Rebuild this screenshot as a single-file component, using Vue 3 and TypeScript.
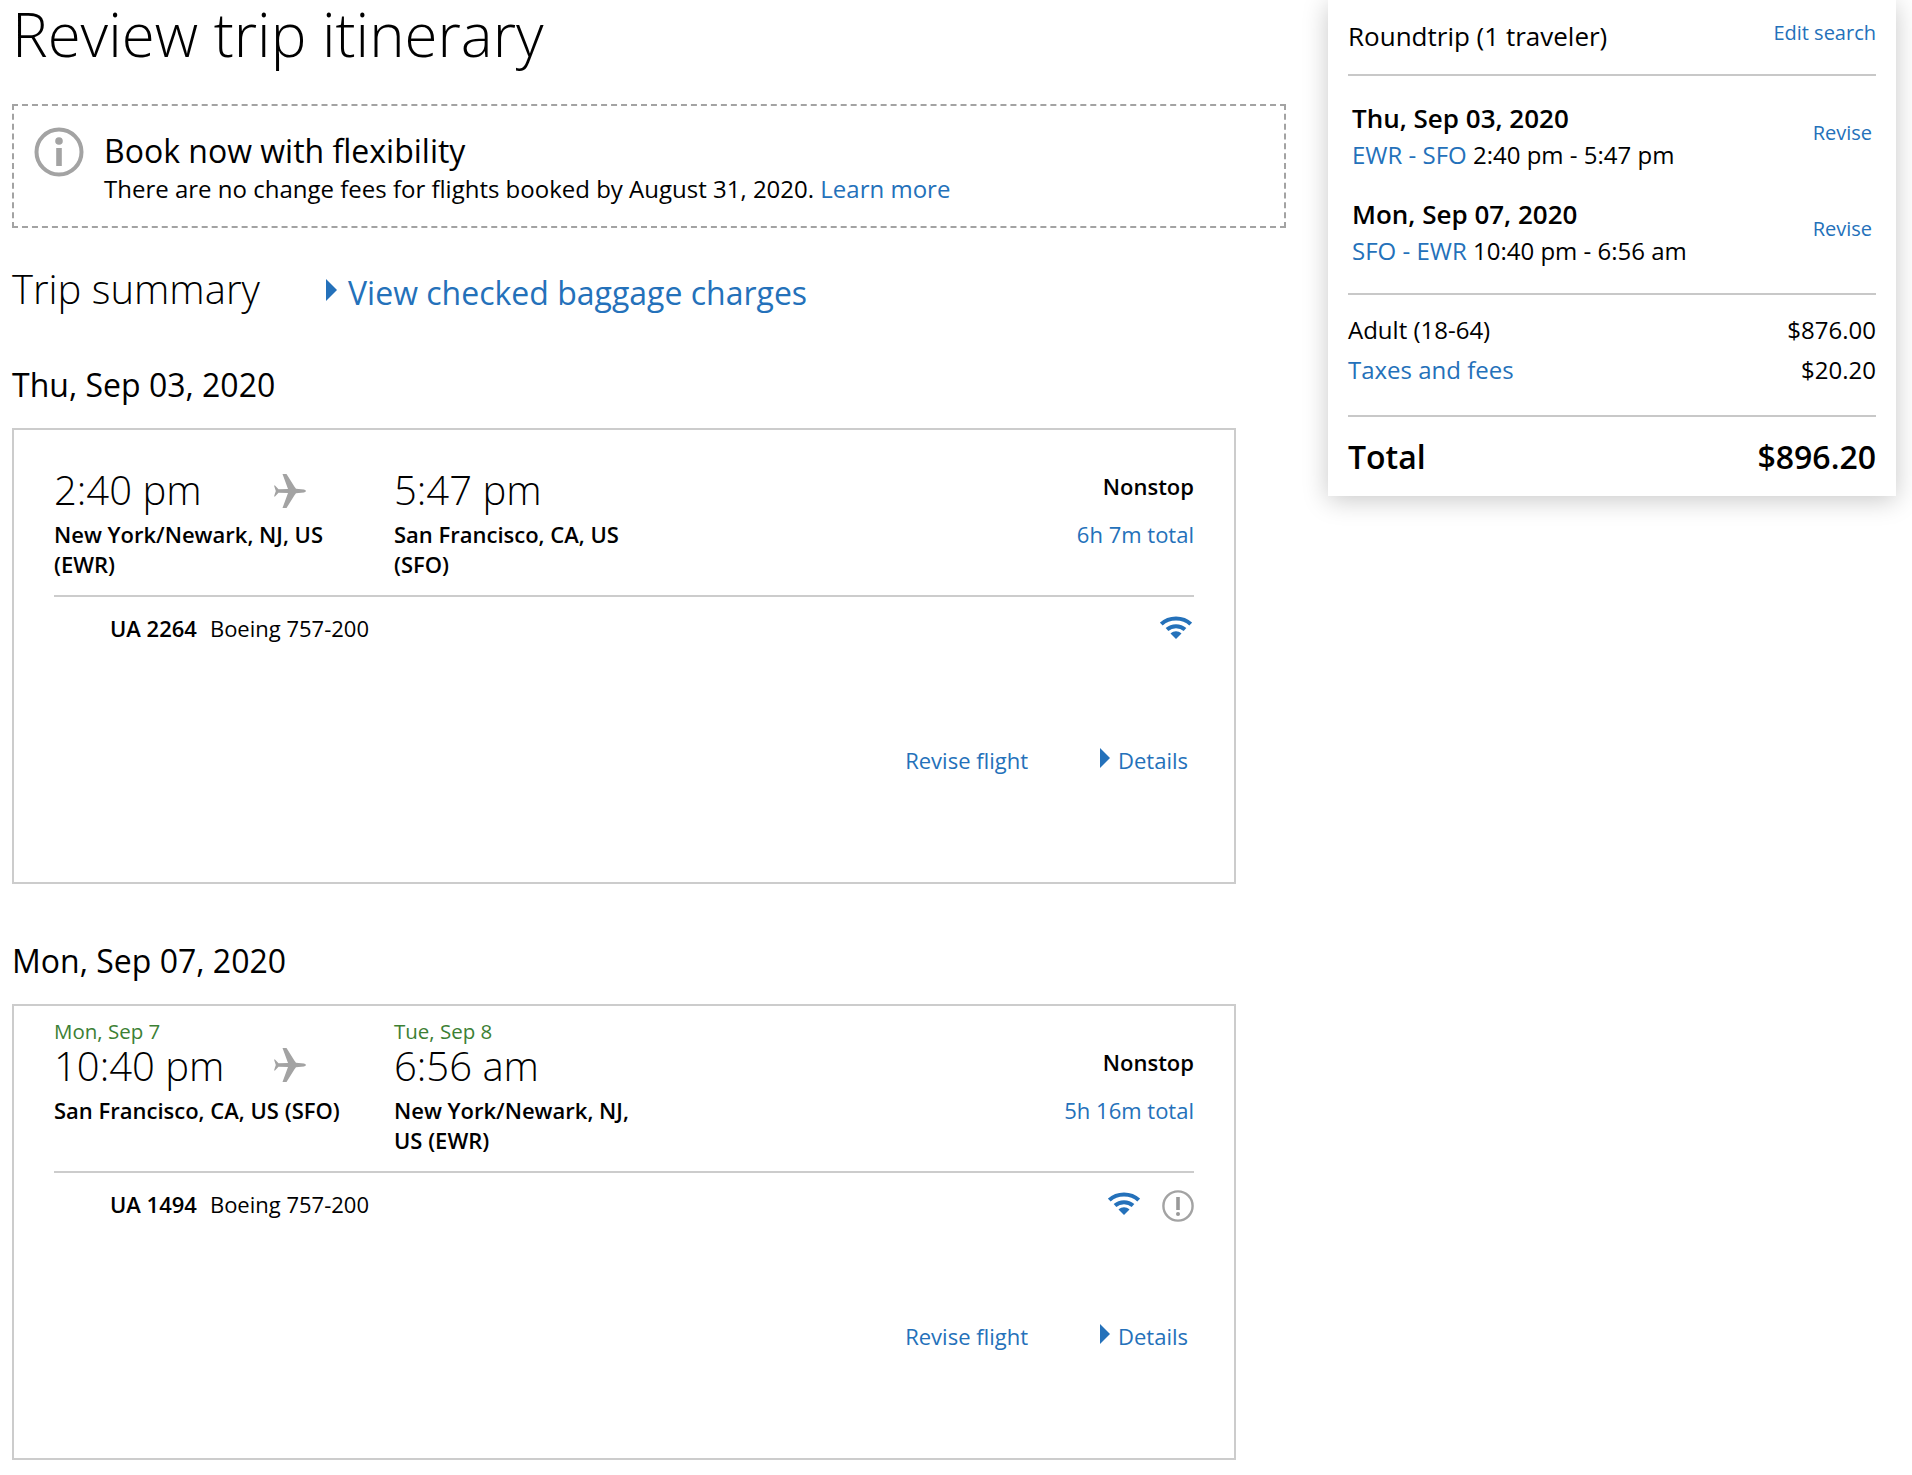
<script setup lang="ts">
interface Place { day?: string; time: string; city: string }
interface Flight {
  date: string
  from: Place
  to: Place
  duration: string
  number: string
  aircraft: string
  notice: boolean
  compact: boolean
}
const flights: Flight[] = [
  {
    date: 'Thu, Sep 03, 2020',
    from: { time: '2:40 pm', city: 'New York/Newark, NJ, US (EWR)' },
    to: { time: '5:47 pm', city: 'San Francisco, CA, US (SFO)' },
    duration: '6h 7m total',
    number: 'UA 2264',
    aircraft: 'Boeing 757-200',
    notice: false,
    compact: false,
  },
  {
    date: 'Mon, Sep 07, 2020',
    from: { day: 'Mon, Sep 7', time: '10:40 pm', city: 'San Francisco, CA, US (SFO)' },
    to: { day: 'Tue, Sep 8', time: '6:56 am', city: 'New York/Newark, NJ, US (EWR)' },
    duration: '5h 16m total',
    number: 'UA 1494',
    aircraft: 'Boeing 757-200',
    notice: true,
    compact: true,
  },
]
const legs = [
  { date: 'Thu, Sep 03, 2020', route: 'EWR - SFO', time: '2:40 pm - 5:47 pm' },
  { date: 'Mon, Sep 07, 2020', route: 'SFO - EWR', time: '10:40 pm - 6:56 am' },
]
</script>

<template>
  <div class="page">
    <main class="main">
      <h1 class="title">Review trip itinerary</h1>
      <section class="notice">
        <svg class="info" viewBox="0 0 50 50" width="50" height="50">
          <circle cx="25" cy="25" r="22.5" fill="none" stroke="#a3a3a3" stroke-width="4" />
          <circle cx="25" cy="14" r="3.8" fill="#a3a3a3" />
          <rect x="22.2" y="21" width="5.6" height="18" fill="#a3a3a3" />
        </svg>
        <div>
          <div class="notice-title">Book now with flexibility</div>
          <div class="notice-text">There are no change fees for flights booked by August 31, 2020. <a class="link">Learn more</a></div>
        </div>
      </section>
      <div class="summary">
        <h2 class="summary-title">Trip summary</h2>
        <a class="link baggage"><span class="caret caret-lg"></span>View checked baggage charges</a>
      </div>
      <section v-for="f in flights" :key="f.number" class="flight">
        <h3 class="date">{{ f.date }}</h3>
        <article class="card" :class="{ compact: f.compact }">
          <div class="top">
            <div class="place from">
              <div v-if="f.from.day" class="day">{{ f.from.day }}</div>
              <div class="time-row">
                <div class="time">{{ f.from.time }}</div>
                <svg class="plane" viewBox="0 0 32 34" width="32" height="34">
                  <path fill="#a3a3a3" d="M0 11.5 L1 11.5 L4.5 15.3 L14 15 L8.5 0 L12.5 0 L20.5 12.8 L22 14.8 L30 15.6 Q32 16.2 32 17 Q32 17.8 30 18.4 L22 19.2 L20.5 21.2 L12.5 34 L8.5 34 L14 19 L4.5 18.7 L1 22.5 L0 22.5 L1.8 17 Z" />
                </svg>
              </div>
              <div class="city">{{ f.from.city }}</div>
            </div>
            <div class="place to">
              <div v-if="f.to.day" class="day">{{ f.to.day }}</div>
              <div class="time">{{ f.to.time }}</div>
              <div class="city">{{ f.to.city }}</div>
            </div>
            <div class="stops">
              <div class="nonstop">Nonstop</div>
              <a class="link duration">{{ f.duration }}</a>
            </div>
          </div>
          <div class="detail">
            <div class="detail-row">
              <div class="aircraft"><b>{{ f.number }}</b>{{ f.aircraft }}</div>
              <div class="amenities">
                <svg class="wifi" viewBox="0 0 32 24" width="32" height="24">
                  <path fill="none" stroke="#2471ba" stroke-width="4" d="M1.3 9 C9 1.5 23 1.5 30.7 9" />
                  <path fill="none" stroke="#2471ba" stroke-width="4" d="M7 14.5 C12 10 20 10 25 14.5" />
                  <path fill="#2471ba" d="M10.5 18.5 C14 15.5 18 15.5 21.5 18.5 L16 24 Z" />
                </svg>
                <svg v-if="f.notice" class="alert" viewBox="0 0 32 32" width="32" height="32">
                  <circle cx="16" cy="16" r="14.6" fill="none" stroke="#a3a3a3" stroke-width="2.4" />
                  <rect x="14.2" y="7" width="3.6" height="13" fill="#999999" />
                  <circle cx="16" cy="24" r="2" fill="#999999" />
                </svg>
              </div>
            </div>
            <div class="actions">
              <a class="link">Revise flight</a>
              <a class="link details"><span class="caret"></span>Details</a>
            </div>
          </div>
        </article>
      </section>
    </main>
    <aside class="side">
      <div class="side-head">
        <span class="trip">Roundtrip (1 traveler)</span>
        <a class="link small">Edit search</a>
      </div>
      <div class="legs">
        <div v-for="l in legs" :key="l.date" class="leg">
          <div>
            <div class="leg-date">{{ l.date }}</div>
            <div class="leg-line"><a class="link">{{ l.route }}</a> {{ l.time }}</div>
          </div>
          <a class="link small">Revise</a>
        </div>
      </div>
      <div class="prices">
        <div class="price"><span>Adult (18-64)</span><span>$876.00</span></div>
        <div class="price"><a class="link">Taxes and fees</a><span>$20.20</span></div>
      </div>
      <div class="total"><span>Total</span><span>$896.20</span></div>
    </aside>
  </div>
</template>

<style>
html, body { margin: 0; background: #fff; }
</style>

<style scoped>
.page {
  width: 1912px;
  height: 1475px;
  overflow: hidden;
  display: flex;
  align-items: flex-start;
  font-family: "Open Sans", "Liberation Sans", sans-serif;
  color: #000;
  background: #fff;
}
.main { width: 1274px; margin-left: 12px; flex: none; }
.link { color: #2471ba; }
.title { margin: 0; height: 104px; font-size: 60px; line-height: 68px; font-weight: 300; }
.notice {
  box-sizing: border-box;
  height: 124px;
  border: 2px dashed #a3a3a3;
  display: flex;
  gap: 20px;
  padding: 22px 20px;
}
.info { flex: none; margin-top: -1px; }
.notice-title { font-size: 32px; line-height: 44px; margin-top: 1px; }
.notice-text { font-size: 24px; line-height: 34px; margin-top: -1px; }
.summary { display: flex; align-items: center; height: 70px; margin-top: 26px; }
.summary-title { margin: 0; width: 314px; font-size: 40px; line-height: 50px; font-weight: 300; }
.baggage { font-size: 32px; line-height: 50px; margin-top: 7px; display: flex; align-items: center; }
.caret {
  display: inline-block;
  width: 0;
  height: 0;
  border-style: solid;
  border-color: transparent transparent transparent #2471ba;
  border-width: 10px 0 10px 10px;
  margin-right: 8px;
  margin-top: -4px;
}
.caret-lg { border-width: 11px 0 11px 11px; margin-right: 11px; margin-top: -5px; }
.date { margin: 38px 0 0; height: 66px; font-size: 32px; line-height: 46px; font-weight: 400; }
.flight + .flight .date { margin-top: 54px; }
.card {
  box-sizing: border-box;
  width: 1224px;
  height: 456px;
  border: 2px solid #cccccc;
  padding: 32px 40px 0;
}
.top { display: flex; height: 133px; border-bottom: 2px solid #cccccc; box-sizing: content-box; }
.compact { padding-top: 13px; }
.compact .top { height: 152px; }
.place { flex: none; }
.from { width: 340px; }
.from .city { max-width: 300px; }
.to { width: 240px; }
.time-row { display: flex; align-items: center; }
.time-row .time { width: 220px; flex: none; }
.plane { flex: none; }
.day { font-size: 20.5px; line-height: 24px; color: #3c8034; font-weight: 400; }
.time { font-size: 40px; line-height: 56px; font-weight: 300; margin-bottom: 1px; }
.compact .time { line-height: 46px; margin-bottom: 6px; }
.compact .plane { margin-bottom: 8px; }
.city { font-size: 22px; line-height: 30px; font-weight: 600; }
.stops { margin-left: auto; text-align: right; font-size: 22px; line-height: 30px; padding-top: 9px; }
.nonstop { font-weight: 600; margin-bottom: 18px; }
.duration { display: block; }
.compact .stops { padding-top: 28px; }
.detail-row { display: flex; justify-content: space-between; padding-top: 16px; height: 120px; box-sizing: content-box; }
.aircraft { font-size: 22px; line-height: 30px; padding-left: 56px; }
.aircraft b { font-weight: 600; margin-right: 13px; }
.amenities { display: flex; gap: 20px; align-items: flex-start; margin-top: -2px; }
.wifi { margin: 4px 2px 0 0; }
.alert { margin-top: 3px; }
.actions { display: flex; justify-content: flex-end; gap: 72px; padding: 12px 6px 0 0; font-size: 22px; line-height: 30px; }
.details { display: flex; align-items: center; }
.side {
  box-sizing: border-box;
  width: 568px;
  height: 496px;
  margin-left: 42px;
  flex: none;
  padding: 0 20px;
  background: #fff;
  box-shadow: 0 4px 24px rgba(0, 0, 0, 0.22);
}
.side-head { height: 74px; border-bottom: 2px solid #c8c8c8; display: flex; justify-content: space-between; }
.trip { font-size: 26px; line-height: 36px; margin-top: 18px; }
.small { font-size: 20px; line-height: 28px; }
.side-head .small { margin-top: 19px; }
.legs { height: 205px; border-bottom: 2px solid #c8c8c8; box-sizing: content-box; }
.leg { display: flex; justify-content: space-between; align-items: center; padding: 0 4px; height: 96px; }
.leg:first-child { margin-top: 12px; }
.leg .small { margin-bottom: 6px; }
.leg-date { font-size: 26px; line-height: 37px; font-weight: 600; }
.leg-line { font-size: 24px; line-height: 36px; }
.prices { height: 122px; border-bottom: 2px solid #c8c8c8; padding-top: 15px; box-sizing: border-box; }
.price { display: flex; justify-content: space-between; font-size: 24px; line-height: 40px; }
.total { display: flex; justify-content: space-between; font-size: 32px; line-height: 44px; font-weight: 600; padding-top: 18px; }
</style>
